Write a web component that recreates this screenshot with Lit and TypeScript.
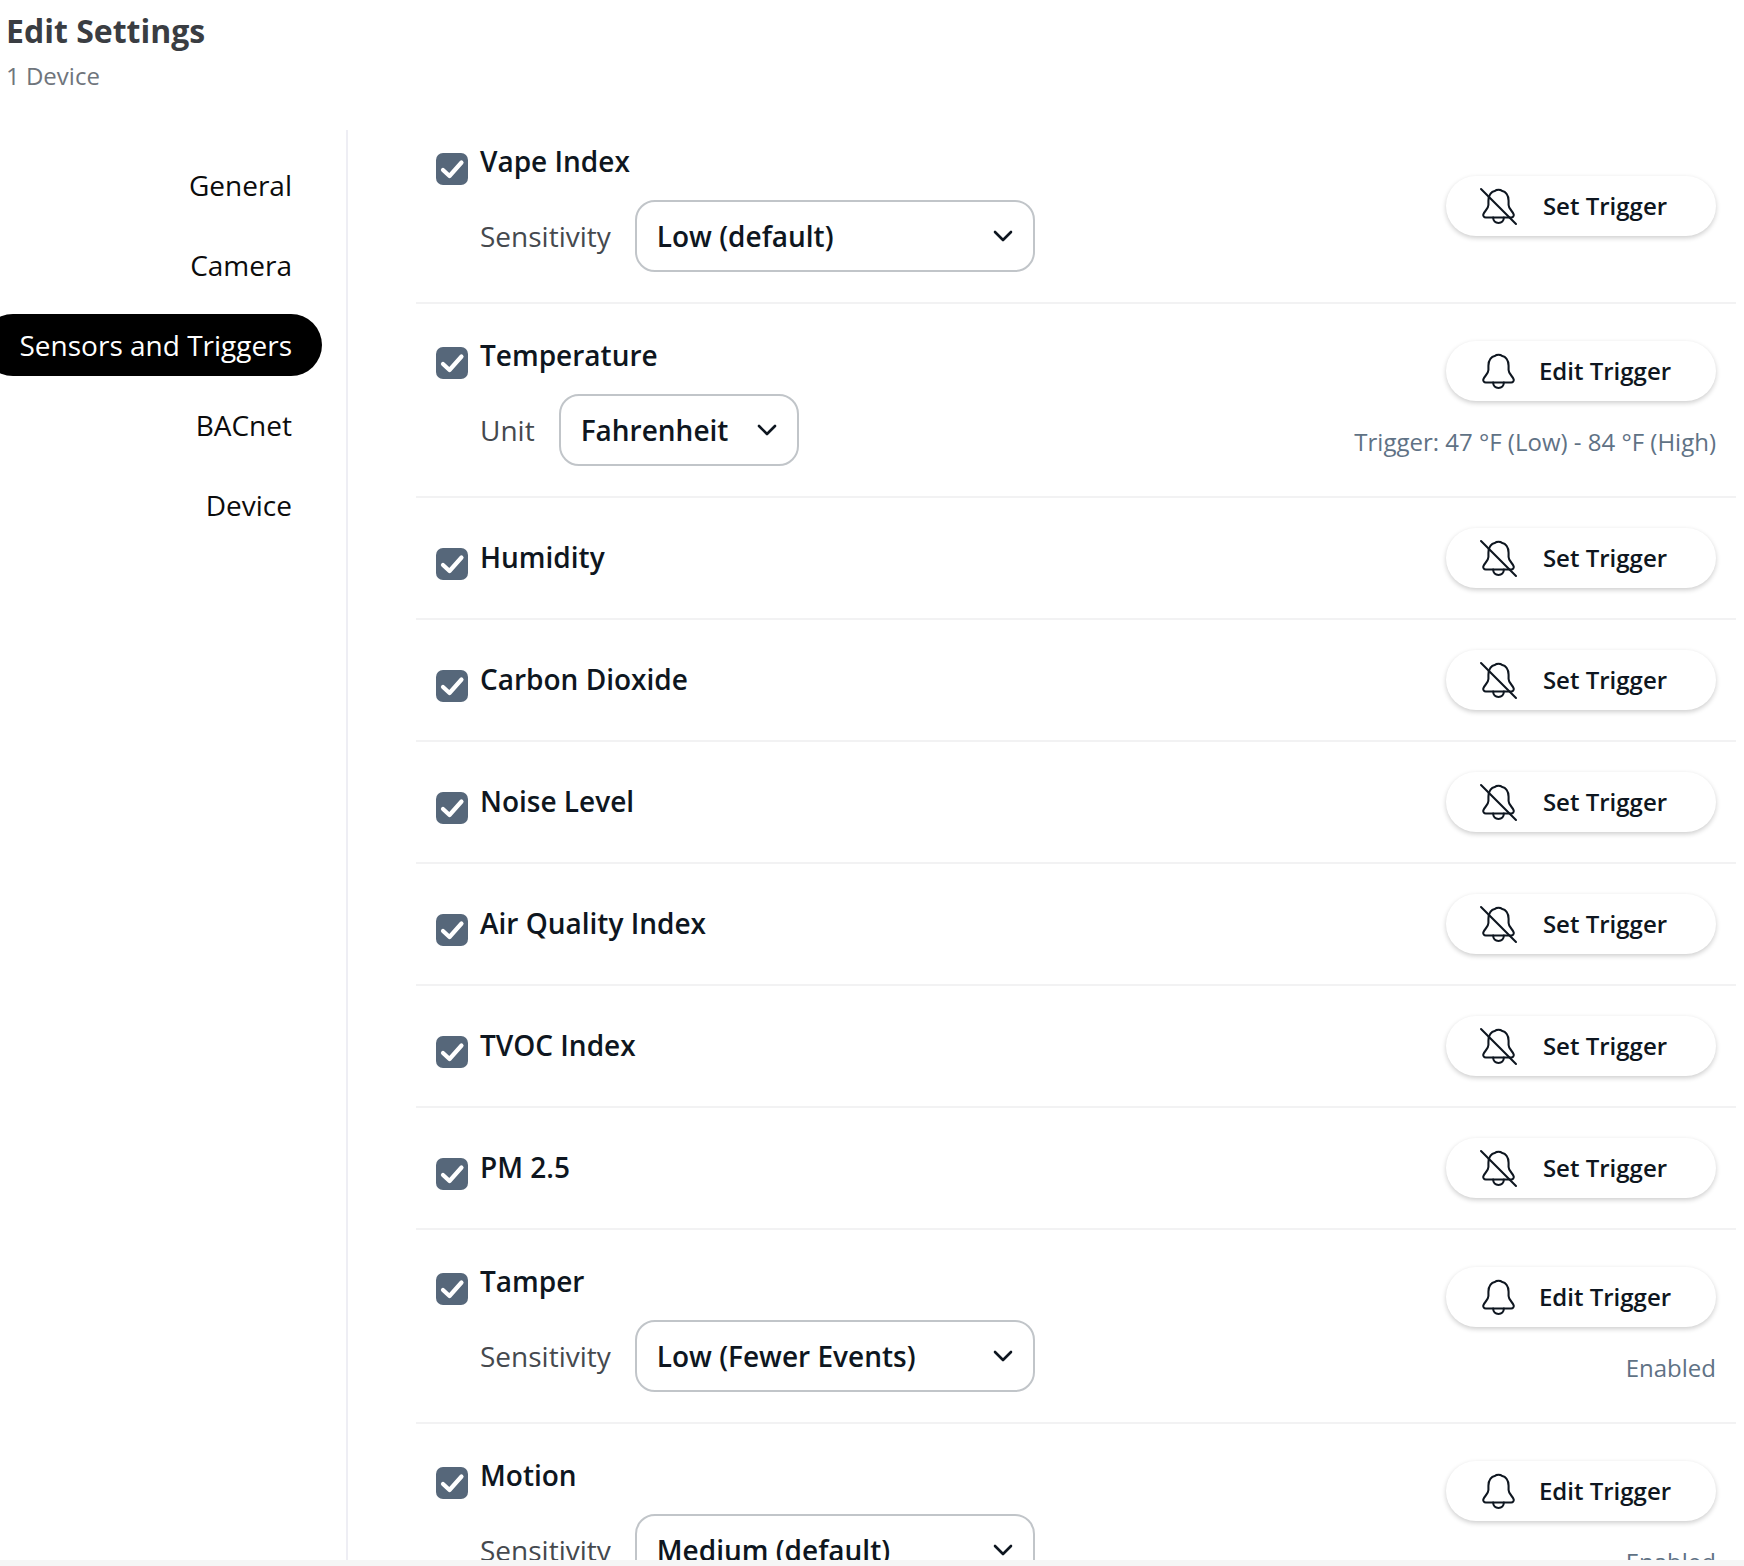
import { LitElement, html, css, svg } from "lit";
import { customElement } from "lit/decorators.js";

type Row = { name: string; field?: string; value?: string; wide?: boolean; edit?: boolean; note?: string };

const rows: Row[] = [
  { name: "Vape Index", field: "Sensitivity", value: "Low (default)", wide: true },
  { name: "Temperature", field: "Unit", value: "Fahrenheit", edit: true, note: "Trigger: 47 °F (Low) - 84 °F (High)" },
  { name: "Humidity" },
  { name: "Carbon Dioxide" },
  { name: "Noise Level" },
  { name: "Air Quality Index" },
  { name: "TVOC Index" },
  { name: "PM 2.5" },
  { name: "Tamper", field: "Sensitivity", value: "Low (Fewer Events)", wide: true, edit: true, note: "Enabled" },
  { name: "Motion", field: "Sensitivity", value: "Medium (default)", wide: true, edit: true, note: "Enabled" },
];

const nav = ["General", "Camera", "Sensors and Triggers", "BACnet", "Device"];

const bell = svg`
  <path d="M13 2.6C13.8 1.4 18.2 1.4 19 2.6C23.5 3.6 25.8 7.5 25.8 12.5V16.5C25.8 20.5 30.2 22.8 30.8 25.8C31.1 27.4 30 28.6 28.4 28.6H3.6C2 28.6 .9 27.4 1.2 25.8C1.8 22.8 6.2 20.5 6.2 16.5V12.5C6.2 7.5 8.5 3.6 13 2.6Z"/>
  <path d="M10.8 28.8C10.8 32 13 34 16 34C19 34 21.2 32 21.2 28.8"/>`;

@customElement("app-root")
export class AppRoot extends LitElement {
  static styles = css`
    :host {
      display: block;
      height: 1566px;
      overflow: hidden;
      background: #f5f5f5;
      font-family: "Open Sans", "Noto Sans", sans-serif;
      color: #0e1620;
    }
    .page { height: 1560px; overflow: hidden; background: #fff; }
    .head { height: 110px; padding-left: 6px; box-sizing: border-box; }
    h1 { margin: 0; padding-top: 9px; font-size: 32px; line-height: 43px; font-weight: 700; color: #3a3d42; }
    .sub { margin-top: 7px; font-size: 24px; line-height: 33px; color: #6f757c; }
    .body { display: flex; align-items: flex-start; }
    .side {
      flex: none;
      width: 348px;
      height: 1430px;
      margin-top: 20px;
      padding-top: 24px;
      box-sizing: border-box;
      border-right: 2px solid #eeeef4;
      display: flex;
      flex-direction: column;
      gap: 18px;
    }
    .nav {
      flex: none;
      height: 62px;
      width: 340px;
      margin-left: -18px;
      padding-right: 30px;
      box-sizing: border-box;
      display: flex;
      align-items: center;
      justify-content: flex-end;
      font-size: 28px;
      color: #0c0c0c;
      border-radius: 31px;
    }
    .nav.on { background: #000; color: #fff; }
    .main { flex: 1; min-width: 0; padding: 0 8px 0 68px; }
    .row {
      display: flex;
      align-items: center;
      justify-content: space-between;
      min-height: 120px;
      padding: 0 20px;
      border-bottom: 2px solid #f2f2f3;
    }
    .row.tall { min-height: 192px; }
    .left { display: flex; align-items: flex-start; gap: 12px; }
    .check {
      flex: none;
      width: 32px;
      height: 32px;
      margin-top: 11px;
      border-radius: 7px;
      background: #56677a;
      display: block;
    }
    .tall .check { margin-top: 12px; }
    .check path { fill: none; stroke: #fff; stroke-width: 4.2; stroke-linecap: round; stroke-linejoin: round; }
    .name { font-size: 28px; line-height: 40px; font-weight: 600; height: 43px; }
    .tall .name { height: 40px; }
    .field { display: flex; align-items: center; gap: 24px; margin-top: 19px; }
    .field-label { font-size: 28px; color: #45494e; }
    .select {
      box-sizing: border-box;
      height: 72px;
      padding: 0 20px 0 20px;
      display: flex;
      align-items: center;
      justify-content: space-between;
      gap: 29px;
      border: 2px solid #c1c5c9;
      border-radius: 20px;
      font-size: 28px;
      font-weight: 600;
    }
    .select.wide { width: 400px; }
    .chev { flex: none; width: 20px; height: 12px; }
    .chev path { fill: none; stroke: #0e1620; stroke-width: 2.6; stroke-linecap: round; stroke-linejoin: round; }
    .right { display: flex; flex-direction: column; align-items: flex-end; }
    .right.noted { padding-top: 1px; }
    .btn {
      box-sizing: border-box;
      width: 270px;
      height: 60px;
      padding: 0 21px 1px 36px;
      display: flex;
      align-items: center;
      border-radius: 30px;
      background: #fff;
      box-shadow: 0 2px 5px rgba(0, 0, 0, 0.2);
    }
    .bell { flex: none; width: 33px; height: 36px; overflow: visible; }
    .bell path { fill: none; stroke: #0e1620; stroke-width: 2; stroke-linecap: round; stroke-linejoin: round; }
    .btn span { flex: 1; text-align: center; font-size: 24px; font-weight: 600; }
    .note { margin-top: 23px; font-size: 24px; line-height: 36px; color: #5f7285; }
  `;

  private renderRow(r: Row) {
    return html`<div class="row ${r.field ? "tall" : ""}">
      <div class="left">
        <svg class="check" viewBox="0 0 32 32"><path d="M7 17l6.5 6L25.5 9.5"/></svg>
        <div>
          <div class="name">${r.name}</div>
          ${r.field
            ? html`<div class="field">
                <span class="field-label">${r.field}</span>
                <div class="select ${r.wide ? "wide" : ""}">
                  <span>${r.value}</span>
                  <svg class="chev" viewBox="0 0 20 12"><path d="M2 2l8 8 8-8"/></svg>
                </div>
              </div>`
            : ""}
        </div>
      </div>
      <div class="right ${r.note ? "noted" : ""}">
        <div class="btn">
          <svg class="bell" viewBox="0 0 32 35">
            ${bell}
            ${r.edit ? "" : svg`<path d="M-1 1L33 35"/>`}
          </svg>
          <span>${r.edit ? "Edit Trigger" : "Set Trigger"}</span>
        </div>
        ${r.note ? html`<div class="note">${r.note}</div>` : ""}
      </div>
    </div>`;
  }

  render() {
    return html`<div class="page">
      <div class="head">
        <h1>Edit Settings</h1>
        <div class="sub">1 Device</div>
      </div>
      <div class="body">
        <nav class="side">
          ${nav.map((n) => html`<div class="nav ${n === "Sensors and Triggers" ? "on" : ""}">${n}</div>`)}
        </nav>
        <div class="main">${rows.map((r) => this.renderRow(r))}</div>
      </div>
    </div>`;
  }
}
